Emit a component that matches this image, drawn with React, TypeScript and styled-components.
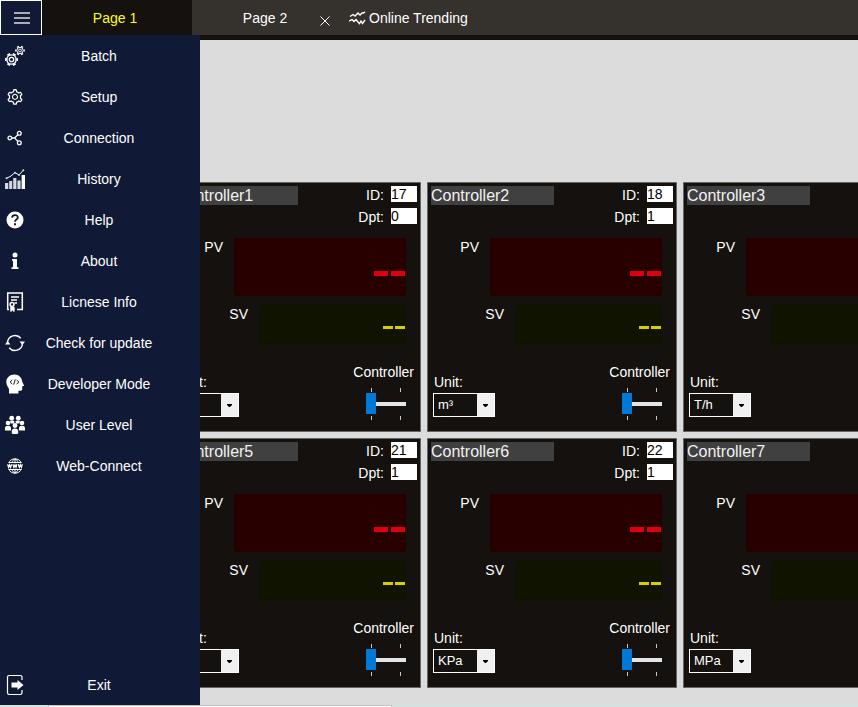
import React, { useId, useState } from 'react';
import styled, { createGlobalStyle } from 'styled-components';
import { AiOutlineSetting } from 'react-icons/ai';

const GlobalStyle = createGlobalStyle`
  *, *::before, *::after { box-sizing: border-box; }
  body {
    margin: 0;
    overflow: hidden;
    background: #dcdcdc;
    color: #fff;
    font: 14px/16px "Liberation Sans", Arial, sans-serif;
  }
  button, input, select { font: inherit; color: inherit; margin: 0; border: 0; border-radius: 0; }
`;

const Screen = styled.div`
  display: flex;
  flex-direction: column;
  height: 100vh;
`;

const TopBar = styled.header`
  display: flex;
  height: 35px;
  flex: none;
  background: #35312d;
`;

const MenuButton = styled.button`
  display: grid;
  place-items: center;
  width: 42px;
  padding: 0 0 0 2px;
  border: 1px solid #fff;
  background: #101935;
`;

const Tabs = styled.nav`
  display: flex;
`;

const Tab = styled.button<{ $active?: boolean }>`
  width: ${(p) => (p.$active ? 150 : 122)}px;
  padding: ${(p) => (p.$active ? '0 4px 0 0' : '0 0 0 24px')};
  background: ${(p) => (p.$active ? '#14110e' : 'transparent')};
  color: ${(p) => (p.$active ? '#ffff00' : '#fff')};
`;

const BarButton = styled.button`
  display: flex;
  align-items: center;
  gap: 3px;
  padding: 0;
  background: transparent;
`;

const CloseButton = styled(BarButton)`
  width: 22px;
  justify-content: center;
  padding-top: 6px;
  margin-right: 13px;
`;

const Body = styled.div`
  position: relative;
  display: flex;
  flex: 1;
  min-height: 0;
  border-top: 5px solid #14110e;
`;

const Drawer = styled.aside`
  position: absolute;
  top: -5px;
  left: 0;
  bottom: 0;
  display: flex;
  flex-direction: column;
  justify-content: space-between;
  width: 200px;
  background: #101935;
`;

const MenuItem = styled.button`
  display: grid;
  grid-template-columns: 30px 1fr 32px;
  align-items: center;
  justify-items: center;
  width: 100%;
  height: 41px;
  padding: 0;
  background: transparent;
  svg { display: block; }
`;

const Workspace = styled.main`
  flex: 1;
  overflow: hidden;
  padding: 142px 0 0 171px;
`;

const CardGrid = styled.div`
  display: grid;
  grid-template-columns: repeat(3, 250px);
  gap: 6px;
`;

const Card = styled.section`
  display: flex;
  flex-direction: column;
  height: 250px;
  padding: 3px;
  border: 1px solid #666;
  background: #14110e;
`;

const CardHead = styled.div`
  display: flex;
  justify-content: space-between;
  align-items: flex-start;
`;

const NameInput = styled.input`
  width: 123px;
  height: 19px;
  padding: 1px 0 0;
  background: #404040;
  color: #f2f2f2;
  font-size: 16px;
`;

const Fields = styled.div`
  display: flex;
  flex-direction: column;
  align-items: flex-end;
  gap: 6px;
`;

const Field = styled.label`
  display: flex;
  align-items: center;
  gap: 7px;
  height: 16px;
`;

const FieldName = styled.span`
  padding-top: 2px;
`;

const FieldInput = styled.input`
  width: 26px;
  height: 16px;
  padding: 0;
  background: #fff;
  color: #000;
`;

const ReadoutRow = styled.div<{ $kind: 'pv' | 'sv' }>`
  display: flex;
  justify-content: flex-end;
  gap: 11px;
  margin-top: ${(p) => (p.$kind === 'pv' ? 14 : 9)}px;
  padding-right: 11px;
`;

const Readout = styled.output<{ $kind: 'pv' | 'sv' }>`
  display: flex;
  align-items: center;
  justify-content: flex-end;
  width: ${(p) => (p.$kind === 'pv' ? 172 : 147)}px;
  height: ${(p) => (p.$kind === 'pv' ? 58 : 40)}px;
  padding: ${(p) => (p.$kind === 'pv' ? '13px 1px 0 0' : '5px 1px 0 0')};
  background: ${(p) => (p.$kind === 'pv' ? '#280000' : '#0f1300')};
`;

const ReadoutLabel = styled.span`
  padding-top: 1px;
`;

const CardFoot = styled.div`
  display: flex;
  justify-content: space-between;
  align-items: flex-start;
  margin-top: 19px;
  padding: 0 3px 0 2px;
`;

const UnitGroup = styled.label`
  display: flex;
  flex-direction: column;
  gap: 3px;
  padding-top: 10px;
`;

const UnitName = styled.span`
  padding-left: 1px;
`;

const SelectFrame = styled.span`
  display: grid;
  grid-template-columns: 1fr 17px;
  width: 62px;
  height: 24px;
  border: 1px solid #fff;
`;

const UnitSelect = styled.select`
  grid-area: 1 / 1 / 2 / 3;
  appearance: none;
  width: 100%;
  padding: 0 17px 0 4px;
  background: transparent;
  font-size: 13px;
  outline: none;
  option { color: #000; }
`;

const SelectArrow = styled.span`
  grid-area: 1 / 2;
  display: grid;
  place-items: center;
  background: #f0f0f0;
  pointer-events: none;
`;

const SliderGroup = styled.div`
  display: flex;
  flex-direction: column;
  align-items: flex-end;
`;

const SliderBody = styled.div`
  display: flex;
  flex-direction: column;
  gap: 1px;
  width: 40px;
  margin: 8px 8px 0 0;
`;

const Ticks = styled.div`
  display: flex;
  justify-content: space-between;
  height: 4px;
  padding: 0 5px;
  &::before, &::after { content: ""; width: 1px; background: #c8c8c8; }
`;

const Slider = styled.input`
  appearance: none;
  width: 40px;
  height: 22px;
  background: transparent;
  &::-webkit-slider-runnable-track {
    height: 4px;
    background: #e2e5e8;
  }
  &::-webkit-slider-thumb {
    appearance: none;
    width: 10px;
    height: 21px;
    margin-top: -9px;
    background: #0078d7;
  }
`;

const StatusStrip = styled.footer`
  display: flex;
  flex: none;
  height: 2px;
  padding-left: 48px;
  background: #d2e2de;
`;

const StatusPanel = styled.div`
  width: 344px;
  border: solid #c4c4c4;
  border-width: 1px 1px 0;
  background: #fff;
`;

const BatchIcon = () => (
  <svg width="20" height="22" viewBox="0 0 20 22" fill="none" stroke="#fff">
    <circle cx="6.5" cy="14.500" r="2.200" strokeWidth="1.300" />
    <circle cx="6.5" cy="14.500" r="4.600" strokeWidth="1.400" />
    <circle cx="6.5" cy="14.500" r="5.800" strokeWidth="1.600" pathLength="12" strokeDasharray="1 1" strokeDashoffset="0.500" />
    <circle cx="15" cy="5.500" r="1.400" strokeWidth="1" />
    <circle cx="15" cy="5.500" r="3.200" strokeWidth="1" />
    <circle cx="15" cy="5.500" r="4.200" strokeWidth="1.300" pathLength="12" strokeDasharray="1 1" strokeDashoffset="0.500" />
  </svg>
);

const SetupIcon = () => <AiOutlineSetting size={18} color="#fff" />;

const ConnectionIcon = () => (
  <svg width="16" height="16" viewBox="0 0 16 16" fill="none" stroke="#fff" strokeWidth="1.3">
    <circle cx="2.8" cy="8" r="1.8" />
    <circle cx="12.3" cy="3.3" r="1.9" />
    <circle cx="12.3" cy="12.7" r="1.9" />
    <path d="M4.6 8h3.2M10.9 4.6 7.6 8l3.3 3.4" />
  </svg>
);

const HistoryIcon = () => (
  <svg width="20" height="20" viewBox="0 0 20 20" fill="#d5d8df">
    <path d="M0 14h3.3v6H0zM4.2 12h3v8h-3zM8.2 9h3.2v11H8.2zM12.4 11.5h3.2V20h-3.2z" />
    <path fill="#fff" d="M16.6 6H20v14h-3.4z" />
    <path d="M1 9.5 6 7l4-3.5L14 6l4.5-5" fill="none" stroke="#fff" strokeWidth="1" />
    <circle cx="1.5" cy="9.2" r="1" /><circle cx="10" cy="3.8" r="1" /><circle cx="14" cy="6" r="1" /><circle cx="18.3" cy="1.3" r="1" />
  </svg>
);

const HelpIcon = () => (
  <svg width="18" height="18" viewBox="0 0 18 18">
    <circle cx="9" cy="9" r="8.5" fill="#fff" />
    <path d="M6.1 6.6C6.2 3.2 11.9 3.2 11.8 6.5c0 2-2.8 2.1-2.8 4.2" fill="none" stroke="#101935" strokeWidth="1.800" />
    <path d="M8 12.3h2v2H8z" fill="#101935" />
  </svg>
);

const AboutIcon = () => (
  <svg width="8" height="18" viewBox="0 0 8 18" fill="#fff">
    <circle cx="4" cy="3" r="2.5" />
    <path d="M1 7h5v8.3h1.5V17H.5v-1.7H2V8.7H1z" />
  </svg>
);

const LicenseIcon = () => (
  <svg width="18" height="22" viewBox="0 0 18 22" fill="none" stroke="#fff" strokeWidth="1.5">
    <path d="M3 18.500H1.700V2h14.600v16.500H11" />
    <path d="M5 6h8M5 9h6M8.5 12H11" />
    <circle cx="6" cy="13.5" r="1.9" />
    <path d="M4.8 16v4.5L6.5 19l1.6 1.5V16" fill="#fff" strokeWidth="1" />
  </svg>
);

const UpdateIcon = () => (
  <svg width="20" height="18" viewBox="0 0 20 18" fill="none" stroke="#fff" strokeWidth="1.400">
    <path d="M2.500 8.500A7.500 7.500 0 0 1 15.800 4.300M17.500 9.500A7.500 7.500 0 0 1 4.200 13.700" />
    <path fill="#fff" stroke="none" d="M0 10.500 2.600 7l2.900 3.500zM14.500 7.500l2.900 3.500L20 7.500z" />
  </svg>
);

const DeveloperIcon = () => (
  <svg width="18" height="20" viewBox="0 0 18 20">
    <path d="M8.5.5C3.7.5.3 3.8.3 8.1c0 3.1 1.8 5.1 2.7 6.9V19.5h9.4v-2.8h2.3c1 0 1.5-.7 1.5-1.7v-2.6l1.6-.7c.3-.2.3-.5.1-.8L16.3 8C16 3.7 13 .5 8.5.5z" fill="#fff" />
    <path d="M6.3 5.8 4.2 8l2.1 2.2M10.7 5.8 12.8 8l-2.1 2.2M9.3 5.4 7.7 10.6" fill="none" stroke="#101935" strokeWidth="1" />
  </svg>
);

const UsersIcon = () => (
  <svg width="20" height="20" viewBox="0 0 20 20" fill="#fff">
    <circle cx="6.7" cy="3.200" r="2.400" /><circle cx="13.3" cy="3.200" r="2.400" />
    <path d="M5 6.200c1-.8 3.200-.8 4.500 0L9 8.500H5.800zM10.500 6.200c1.300-.8 3.500-.8 4.500 0l-.8 2.300H11z" />
    <circle cx="3" cy="8" r="2.300" /><circle cx="17" cy="8" r="2.300" /><circle cx="10" cy="10.500" r="2.400" />
    <path d="M0 15.500v-2.500c0-3 6-3 6 0v2.500zM14 15.500v-2.500c0-3 6-3 6 0v2.500zM6.800 18.500V16c0-3.300 6.400-3.300 6.400 0v2.500c-1.500.8-5 .8-6.400 0z" />
  </svg>
);

const WebIcon = () => (
  <svg width="16" height="16" viewBox="0 0 16 16" fill="none" stroke="#fff">
    <path d="M1.600 5a7 7 0 0 1 12.800 0M1.600 11a7 7 0 0 0 12.800 0M2 4.500h12M2 11.500h12M8 1v4M8 11v4M5 4.500C5.500 2.800 6.500 1.300 8 1c1.500.3 2.500 1.800 3 3.500M5 11.500c.5 1.700 1.500 3.200 3 3.500 1.500-.3 2.500-1.800 3-3.500" />
    <path strokeWidth="1.200" d="m.6 6.300 1 3.200 1-2.700 1 2.700 1-3.200M5.900 6.300l1 3.200L8 6.800l1 2.700 1-3.200M11.300 6.300l1 3.200 1-2.700 1 2.700 1-3.200" />
  </svg>
);

const ExitIcon = () => (
  <svg width="18" height="22" viewBox="0 0 18 22" fill="none" stroke="#fff" strokeWidth="1.2">
    <path d="M16 6V3.2c0-1-.6-1.7-1.7-1.7H3.2C2.1 1.5 1.500 2.200 1.500 3.200v15.600c0 1 .6 1.700 1.700 1.700h11.100c1.100 0 1.700-.7 1.700-1.700V16" />
    <path fill="#fff" stroke="none" d="M5.500 8.500h6V6l6 5-6 5v-2.500h-6z" />
  </svg>
);

const menu: Array<[string, () => React.ReactElement]> = [
  ['Batch', BatchIcon],
  ['Setup', SetupIcon],
  ['Connection', ConnectionIcon],
  ['History', HistoryIcon],
  ['Help', HelpIcon],
  ['About', AboutIcon],
  ['Licnese Info', LicenseIcon],
  ['Check for update', UpdateIcon],
  ['Developer Mode', DeveloperIcon],
  ['User Level', UsersIcon],
  ['Web-Connect', WebIcon],
];

type Device = { name: string; id: string; dpt: string; unit: string };

const devices: Device[] = [
  { name: 'Controller1', id: '17', dpt: '0', unit: '' },
  { name: 'Controller2', id: '18', dpt: '1', unit: 'm³' },
  { name: 'Controller3', id: '19', dpt: '1', unit: 'T/h' },
  { name: 'Controller5', id: '21', dpt: '1', unit: '' },
  { name: 'Controller6', id: '22', dpt: '1', unit: 'KPa' },
  { name: 'Controller7', id: '23', dpt: '1', unit: 'MPa' },
];

const units = ['', 'm³', 'T/h', 'KPa', 'MPa'];

const Dashes = ({ kind }: { kind: 'pv' | 'sv' }) =>
  kind === 'pv' ? (
    <svg width="31" height="5" role="img" aria-label="No process value" fill="#dc0010">
      <path d="M0 0h14v5H0zM17 0h14v5H17z" />
    </svg>
  ) : (
    <svg width="22" height="3" role="img" aria-label="No set value" fill="#d4d000">
      <path d="M0 0h10v3H0zM12 0h10v3H12z" />
    </svg>
  );

function ControllerCard({ device }: { device: Device }) {
  const sliderId = useId();
  return (
    <Card>
      <CardHead>
        <NameInput aria-label="Name" defaultValue={device.name} />
        <Fields>
          <Field><FieldName>ID:</FieldName><FieldInput defaultValue={device.id} /></Field>
          <Field><FieldName>Dpt:</FieldName><FieldInput defaultValue={device.dpt} /></Field>
        </Fields>
      </CardHead>
      <ReadoutRow $kind="pv">
        <ReadoutLabel>PV</ReadoutLabel>
        <Readout $kind="pv"><Dashes kind="pv" /></Readout>
      </ReadoutRow>
      <ReadoutRow $kind="sv">
        <ReadoutLabel>SV</ReadoutLabel>
        <Readout $kind="sv"><Dashes kind="sv" /></Readout>
      </ReadoutRow>
      <CardFoot>
        <UnitGroup>
          <UnitName>Unit:</UnitName>
          <SelectFrame>
            <SelectArrow>
              <svg width="5" height="3" fill="#000"><path d="M0 0h5v1L3 3H2L0 1z" /></svg>
            </SelectArrow>
            <UnitSelect defaultValue={device.unit}>
              {units.map((u) => <option key={u} value={u}>{u}</option>)}
            </UnitSelect>
          </SelectFrame>
        </UnitGroup>
        <SliderGroup>
          <label htmlFor={sliderId}>Controller</label>
          <SliderBody>
            <Ticks />
            <Slider id={sliderId} type="range" min={0} max={1} defaultValue={0} />
            <Ticks />
          </SliderBody>
        </SliderGroup>
      </CardFoot>
    </Card>
  );
}

export default function App() {
  const [open, setOpen] = useState(true);
  return (
    <Screen>
      <GlobalStyle />
      <TopBar>
        <MenuButton aria-label="Menu" aria-expanded={open} onClick={() => setOpen(!open)}>
          <svg width="16" height="12" fill="#a9adb8"><path d="M0 0h16v2H0zM0 5h16v2H0zM0 10h16v2H0z" /></svg>
        </MenuButton>
        <Tabs>
          <Tab $active>Page 1</Tab>
          <Tab>Page 2</Tab>
        </Tabs>
        <CloseButton aria-label="Close page">
          <svg width="10" height="10" stroke="#fff" strokeWidth="1"><path d="m.5.5 9 9M9.500.5l-9 9" /></svg>
        </CloseButton>
        <BarButton>
          <svg width="17" height="14" viewBox="0 0 17 14" fill="none" stroke="#fff" strokeWidth="1.4">
            <path d="M1 5.500 4 3.500l2 1.500 3-3 2 2 2-2h1.500L16 .7M0 10l3-1.500 2 2 2-2 2 2.500 1.500 1.500L12 10l1.500 2.500L16 9" />
          </svg>
          Online Trending
        </BarButton>
      </TopBar>
      <Body>
        <Workspace>
          <CardGrid>
            {devices.map((d) => <ControllerCard key={d.name} device={d} />)}
          </CardGrid>
        </Workspace>
        {open && (
          <Drawer>
            <nav aria-label="Main menu">
              {menu.map(([label, Icon]) => (
                <MenuItem key={label}><Icon /><span>{label}</span></MenuItem>
              ))}
            </nav>
            <MenuItem><ExitIcon /><span>Exit</span></MenuItem>
          </Drawer>
        )}
      </Body>
      <StatusStrip><StatusPanel /></StatusStrip>
    </Screen>
  );
}
